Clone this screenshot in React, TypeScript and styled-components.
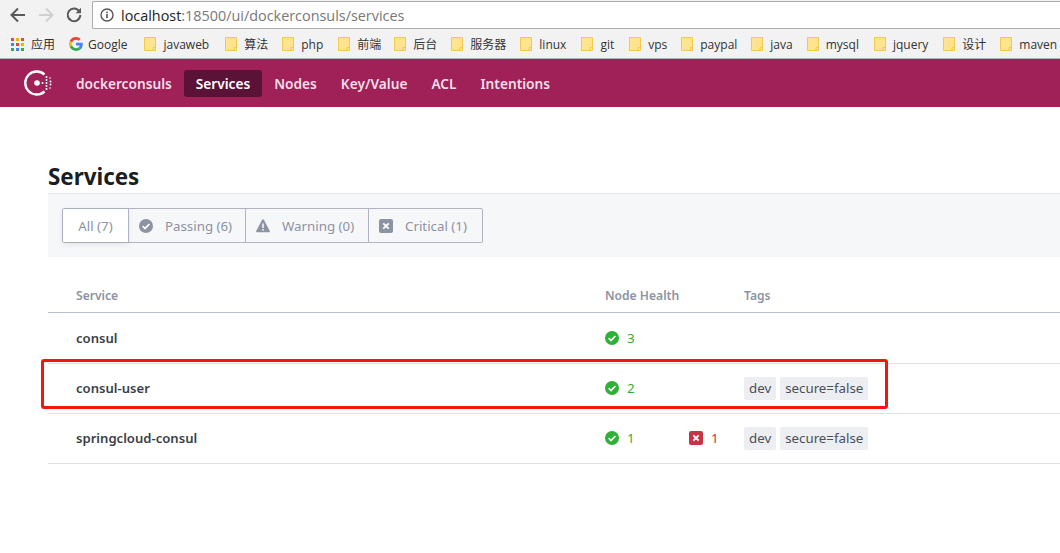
import React from 'react'
import styled, { createGlobalStyle } from 'styled-components'

const GlobalStyle = createGlobalStyle`
  html, body {
    margin: 0;
    padding: 0;
    background: #fff;
    overflow: hidden;
  }
  body {
    font-family: "Noto Sans", "Noto Sans CJK SC", sans-serif;
  }
`

const bookmarks = [
  { name: 'javaweb', gap: 16 },
  { name: '算法', gap: 14 },
  { name: 'php', gap: 15 },
  { name: '前端', gap: 13 },
  { name: '后台', gap: 14 },
  { name: '服务器', gap: 14 },
  { name: 'linux', gap: 15 },
  { name: 'git', gap: 15 },
  { name: 'vps', gap: 14 },
  { name: 'paypal', gap: 14 },
  { name: 'java', gap: 14 },
  { name: 'mysql', gap: 15 },
  { name: 'jquery', gap: 15 },
  { name: '设计', gap: 14 },
  { name: 'maven', gap: 14 },
]

const filters = [
  { label: 'All (7)', icon: null, active: true, width: 65 },
  { label: 'Passing (6)', icon: 'check', active: false, width: 117 },
  { label: 'Warning (0)', icon: 'warning', active: false, width: 123 },
  { label: 'Critical (1)', icon: 'critical', active: false, width: 114 },
]

const services = [
  { name: 'consul', passing: 3, critical: 0, tags: [] as string[] },
  { name: 'consul-user', passing: 2, critical: 0, tags: ['dev', 'secure=false'] },
  { name: 'springcloud-consul', passing: 1, critical: 1, tags: ['dev', 'secure=false'] },
]

const CheckIcon = ({ color }: { color: string }) => (
  <svg width="14" height="14" viewBox="0 0 14 14">
    <circle cx="7" cy="7" r="7" fill={color} />
    <path d="M3.7 7.2l2.3 2.3 4.4-4.5" fill="none" stroke="#fff" strokeWidth="1.7" />
  </svg>
)

const WarningIcon = ({ color }: { color: string }) => (
  <svg width="14" height="14" viewBox="0 0 14 14">
    <path d="M7 .3c.4 0 .7.2.9.5l5.9 11.2c.3.6-.1 1.300-.8 1.300H1c-.7 0-1.100-.7-.8-1.300L6.100.8c.2-.3.5-.5.9-.5z" fill={color} />
    <rect x="6.200" y="4.500" width="1.600" height="4.500" fill="#f6f7f9" />
    <rect x="6.200" y="10" width="1.600" height="1.600" fill="#f6f7f9" />
  </svg>
)

const CriticalIcon = ({ color }: { color: string }) => (
  <svg width="14" height="14" viewBox="0 0 14 14">
    <rect width="14" height="14" rx="2" fill={color} />
    <path d="M4.300 4.300l5.400 5.400M9.700 4.300l-5.400 5.400" stroke="#fff" strokeWidth="1.800" />
  </svg>
)

const ConsulLogo = () => (
  <svg width="28" height="28" viewBox="0 0 28 28">
    <path d="M20.500 5.500A11.500 11.500 0 1 0 20.500 22.500" fill="none" stroke="#fff" strokeWidth="2.400" />
    <circle cx="13" cy="14" r="2.800" fill="#fff" />
    <g fill="#fff">
      <circle cx="18.500" cy="14" r="1" />
      <circle cx="22.500" cy="8" r="1" />
      <circle cx="26" cy="9" r="0.800" />
      <circle cx="22.500" cy="11" r="1" />
      <circle cx="26.500" cy="12.500" r="1" />
      <circle cx="22.500" cy="14" r="1" />
      <circle cx="26.500" cy="15.500" r="1" />
      <circle cx="22.500" cy="17" r="1" />
      <circle cx="22.500" cy="20" r="1" />
      <circle cx="26" cy="19" r="0.800" />
    </g>
  </svg>
)

const GoogleLogo = () => (
  <svg width="14" height="14" viewBox="0 0 48 48">
    <path fill="#EA4335" d="M24 9.500c3.500 0 6.700 1.300 9.100 3.500l6.800-6.800C35.800 2.400 30.200 0 24 0 14.600 0 6.500 5.400 2.600 13.200l7.900 6.100C12.400 13.600 17.700 9.500 24 9.500z" />
    <path fill="#4285F4" d="M47 24.500c0-1.600-.1-3.100-.4-4.500H24v9h12.900c-.6 3-2.200 5.500-4.700 7.200l7.700 6C44.400 38 47 31.800 47 24.500z" />
    <path fill="#FBBC05" d="M10.500 28.700c-.5-1.400-.8-3-.8-4.700s.3-3.200.8-4.700l-7.900-6.100C.9 16.500 0 20.100 0 24s.9 7.500 2.600 10.800l7.900-6.100z" />
    <path fill="#34A853" d="M24 48c6.500 0 11.900-2.100 15.900-5.800l-7.700-6c-2.100 1.400-4.900 2.300-8.200 2.300-6.300 0-11.600-4.200-13.500-9.900l-7.900 6.100C6.500 42.600 14.600 48 24 48z" />
  </svg>
)

const AppsIcon = () => {
  const colors = ['#e8453c', '#f4b400', '#e8453c', '#4285f4', '#e8453c', '#f4b400', '#34a853', '#4285f4', '#34a853']
  return (
    <AppsGrid>
      {colors.map((c, i) => (
        <AppsDot key={i} $color={c} />
      ))}
    </AppsGrid>
  )
}

const FolderIcon = () => (
  <svg width="12" height="14" viewBox="0 0 12 14">
    <path d="M.5.500h8.500l2.500 0v13H.5z" fill="#fee48f" stroke="#f2c94c" />
    <path d="M9 13.500v-3h2.500" fill="none" stroke="#f2c94c" />
  </svg>
)

export default function App() {
  return (
    <Page>
      <GlobalStyle />
      <Toolbar>
        <NavIcon>
          <svg width="18" height="18" viewBox="0 0 18 18">
            <path d="M16 9H3M9 2.500L2.500 9 9 15.500" fill="none" stroke="#5a5a5a" strokeWidth="2" />
          </svg>
        </NavIcon>
        <NavIcon>
          <svg width="18" height="18" viewBox="0 0 18 18">
            <path d="M2 9h13M9 2.500L15.500 9 9 15.500" fill="none" stroke="#d0d0d0" strokeWidth="2" />
          </svg>
        </NavIcon>
        <NavIcon>
          <svg width="18" height="18" viewBox="0 0 18 18">
            <path d="M14.300 5.500A6.300 6.300 0 1 0 15.300 9" fill="none" stroke="#5a5a5a" strokeWidth="2" />
            <path d="M16 1.800v5.400h-5.400z" fill="#5a5a5a" />
          </svg>
        </NavIcon>
        <UrlBar>
          <svg width="14" height="14" viewBox="0 0 14 14">
            <circle cx="7" cy="7" r="6" fill="none" stroke="#555" strokeWidth="1.400" />
            <rect x="6.200" y="6" width="1.600" height="4.200" fill="#555" />
            <rect x="6.200" y="3.600" width="1.600" height="1.600" fill="#555" />
          </svg>
          <UrlText>
            localhost<UrlRest>:18500/ui/dockerconsuls/services</UrlRest>
          </UrlText>
        </UrlBar>
      </Toolbar>
      <Bookmarks>
        <Bookmark $gap={14} $space={7}>
          <AppsIcon />
          <BookmarkLabel>应用</BookmarkLabel>
        </Bookmark>
        <Bookmark $gap={17} $space={5}>
          <GoogleLogo />
          <BookmarkLabel>Google</BookmarkLabel>
        </Bookmark>
        {bookmarks.map((b) => (
          <Bookmark key={b.name} $gap={b.gap} $space={7}>
            <FolderIcon />
            <BookmarkLabel>{b.name}</BookmarkLabel>
          </Bookmark>
        ))}
      </Bookmarks>
      <TopNav>
        <LogoSlot>
          <ConsulLogo />
        </LogoSlot>
        <NavLink>dockerconsuls</NavLink>
        <NavLink $active>Services</NavLink>
        <NavLink>Nodes</NavLink>
        <NavLink>Key/Value</NavLink>
        <NavLink>ACL</NavLink>
        <NavLink>Intentions</NavLink>
      </TopNav>
      <Main>
        <Title>Services</Title>
        <FilterBar>
          <FilterGroup>
            {filters.map((f) => (
              <FilterButton key={f.label} $active={f.active} $width={f.width}>
                {f.icon === 'check' && <CheckIcon color="#8c93a3" />}
                {f.icon === 'warning' && <WarningIcon color="#8c93a3" />}
                {f.icon === 'critical' && <CriticalIcon color="#8c93a3" />}
                <span>{f.label}</span>
              </FilterButton>
            ))}
          </FilterGroup>
        </FilterBar>
        <Table>
          <HeadRow>
            <ServiceCol>Service</ServiceCol>
            <HealthCol>Node Health</HealthCol>
            <div>Tags</div>
          </HeadRow>
          {services.map((s) => (
            <Row key={s.name}>
              <ServiceName>{s.name}</ServiceName>
              <HealthCol>
                <Health $color="#2eb039">
                  <CheckIcon color="#2eb039" />
                  {s.passing}
                </Health>
                {s.critical > 0 && (
                  <Health $color="#c73445">
                    <CriticalIcon color="#c73445" />
                    {s.critical}
                  </Health>
                )}
              </HealthCol>
              <Tags>
                {s.tags.map((t) => (
                  <Tag key={t}>{t}</Tag>
                ))}
              </Tags>
            </Row>
          ))}
          <Highlight />
        </Table>
      </Main>
    </Page>
  )
}

const Page = styled.div`
  width: 1060px;
  height: 553px;
  overflow: hidden;
  background: #fff;
`

const Toolbar = styled.div`
  display: flex;
  align-items: center;
  height: 30px;
  padding-left: 4px;
  background: #f2f2f2;
`

const NavIcon = styled.div`
  display: flex;
  align-items: center;
  justify-content: center;
  width: 28px;
  height: 30px;
`

const UrlBar = styled.div`
  display: flex;
  align-items: center;
  gap: 7px;
  flex: 1;
  height: 28px;
  margin-left: 4px;
  padding-left: 7px;
  box-sizing: border-box;
  background: #fff;
  border: 1px solid #adadad;
  border-right: none;
  border-radius: 2px 0 0 2px;
`

const UrlText = styled.span`
  font-family: "Open Sans", sans-serif;
  font-size: 14.4px;
  color: #222;
`

const UrlRest = styled.span`
  color: #777;
`

const Bookmarks = styled.div`
  display: flex;
  align-items: center;
  height: 29px;
  padding-left: 11px;
  background: #f2f2f2;
  border-bottom: 1px solid #b5b5b5;
  white-space: nowrap;
  box-sizing: border-box;
`

const Bookmark = styled.div<{ $gap: number; $space: number }>`
  display: flex;
  align-items: center;
  gap: ${(p) => p.$space}px;
  margin-right: ${(p) => p.$gap}px;
  flex-shrink: 0;
`

const BookmarkLabel = styled.span`
  font-family: "Open Sans", "Noto Sans CJK SC", sans-serif;
  font-size: 12px;
  color: #333;
`

const AppsGrid = styled.div`
  display: grid;
  grid-template-columns: repeat(3, 3px);
  grid-auto-rows: 3px;
  gap: 2px;
`

const AppsDot = styled.div<{ $color: string }>`
  background: ${(p) => p.$color};
`

const TopNav = styled.nav`
  display: flex;
  align-items: center;
  height: 48px;
  padding-left: 24px;
  background: #a02157;
`

const LogoSlot = styled.div`
  display: flex;
  margin-right: 12px;
`

const NavLink = styled.a<{ $active?: boolean }>`
  padding: 5px 12px;
  border-radius: 3px;
  font-size: 13.7px;
  line-height: 17px;
  font-weight: 600;
  color: ${(p) => (p.$active ? '#fff' : '#f3dfe9')};
  background: ${(p) => (p.$active ? '#5a1337' : 'transparent')};
`

const Main = styled.main`
  padding-left: 48px;
`

const Title = styled.h1`
  margin: 0;
  padding-top: 55px;
  height: 31px;
  font-size: 22.4px;
  line-height: 30px;
  font-weight: 700;
  color: #1a1d22;
`

const FilterBar = styled.div`
  display: flex;
  align-items: center;
  height: 64px;
  padding-left: 14px;
  box-sizing: border-box;
  background: #f6f7f9;
  border-top: 1px solid #e8eaee;
`

const FilterGroup = styled.div`
  display: flex;
  height: 35px;
  box-sizing: border-box;
  border: 1px solid #aeb4c4;
  border-radius: 2px;
`

const FilterButton = styled.div<{ $active: boolean; $width: number }>`
  display: flex;
  align-items: center;
  justify-content: ${(p) => (p.$active ? 'center' : 'flex-start')};
  gap: 12px;
  width: ${(p) => p.$width}px;
  padding-left: ${(p) => (p.$active ? 0 : 10)}px;
  box-sizing: border-box;
  font-size: 13.3px;
  color: #8c93a3;
  background: ${(p) => (p.$active ? '#fff' : 'transparent')};
  box-shadow: ${(p) => (p.$active ? '0 2px 6px rgba(31, 35, 41, 0.1)' : 'none')};
  & + & {
    border-left: 1px solid #aeb4c4;
  }
`

const Table = styled.div`
  position: relative;
  padding-top: 21px;
`

const HeadRow = styled.div`
  display: flex;
  align-items: center;
  height: 35px;
  margin-bottom: 1px;
  box-sizing: border-box;
  padding-left: 28px;
  border-bottom: 1px solid #b8bdcc;
  font-size: 12.1px;
  font-weight: 600;
  color: #8c93a3;
`

const Row = styled.div`
  display: flex;
  align-items: center;
  height: 50px;
  box-sizing: border-box;
  padding: 0 0 2px 28px;
  border-bottom: 1px solid #dfe1e6;
`

const ServiceCol = styled.div`
  width: 529px;
`

const ServiceName = styled(ServiceCol)`
  font-size: 13.1px;
  font-weight: 600;
  color: #3a3f47;
`

const HealthCol = styled.div`
  display: flex;
  width: 139px;
`

const Health = styled.div<{ $color: string }>`
  display: flex;
  align-items: center;
  flex-shrink: 0;
  gap: 8px;
  width: 84px;
  font-size: 13.3px;
  color: ${(p) => p.$color};
`

const Tags = styled.div`
  display: flex;
  gap: 4px;
  margin-top: 2px;
`

const Tag = styled.span`
  padding: 0 5px;
  height: 23px;
  line-height: 23px;
  font-size: 13.3px;
  color: #4a4f58;
  background: #eceef2;
  border-radius: 2px;
`

const Highlight = styled.div`
  position: absolute;
  left: -7px;
  top: 102px;
  width: 847px;
  height: 50px;
  box-sizing: border-box;
  border: 3px solid #f5150b;
  border-radius: 3px;
`
